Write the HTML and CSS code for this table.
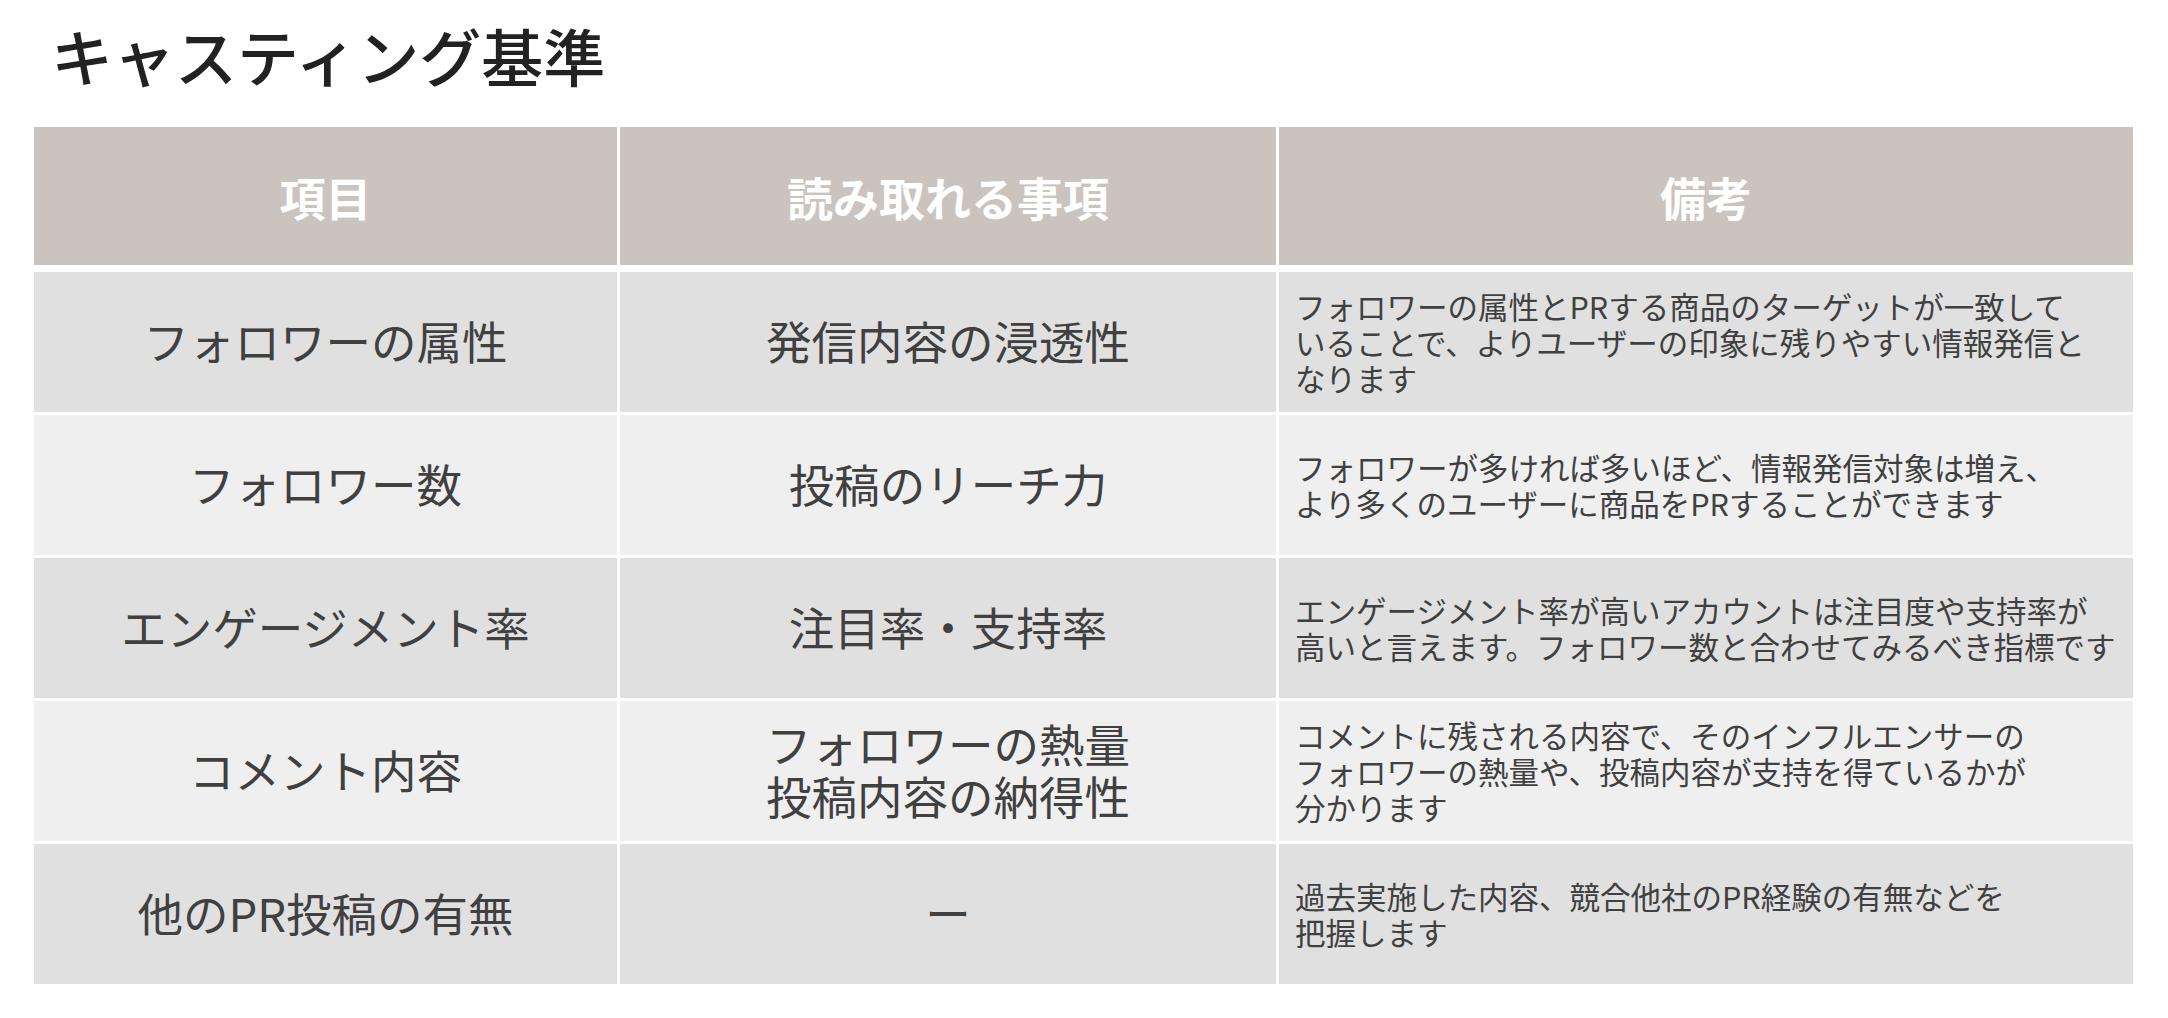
FILE: index.html
```html
<!DOCTYPE html>
<html lang="ja">
<head>
<meta charset="utf-8">
<title>キャスティング基準</title>
<link rel="stylesheet" href="styles.css">
</head>
<body>
<div class="page">
  <h1 class="title">キャスティング基準</h1>
  <div class="table">
    <div class="row head">
      <div class="cell">項目</div>
      <div class="cell">読み取れる事項</div>
      <div class="cell">備考</div>
    </div>
    <div class="row odd">
      <div class="cell big">フォロワーの属性</div>
      <div class="cell big">発信内容の浸透性</div>
      <div class="cell note">フォロワーの属性とPRする商品のターゲットが一致して<br>いることで、よりユーザーの印象に残りやすい情報発信と<br>なります</div>
    </div>
    <div class="row even">
      <div class="cell big">フォロワー数</div>
      <div class="cell big">投稿のリーチ力</div>
      <div class="cell note">フォロワーが多ければ多いほど、情報発信対象は増え、<br>より多くのユーザーに商品をPRすることができます</div>
    </div>
    <div class="row odd">
      <div class="cell big">エンゲージメント率</div>
      <div class="cell big">注目率・支持率</div>
      <div class="cell note">エンゲージメント率が高いアカウントは注目度や支持率が<br>高いと言えます。フォロワー数と合わせてみるべき指標です</div>
    </div>
    <div class="row even">
      <div class="cell big">コメント内容</div>
      <div class="cell big">フォロワーの熱量<br>投稿内容の納得性</div>
      <div class="cell note">コメントに残される内容で、そのインフルエンサーの<br>フォロワーの熱量や、投稿内容が支持を得ているかが<br>分かります</div>
    </div>
    <div class="row odd">
      <div class="cell big">他のPR投稿の有無</div>
      <div class="cell big">ー</div>
      <div class="cell note">過去実施した内容、競合他社のPR経験の有無などを<br>把握します</div>
    </div>
  </div>
</div>
</body>
</html>
```

FILE: styles.css
```css
html, body {
  margin: 0;
  padding: 0;
  background: #ffffff;
}

body {
  font-family: "Noto Sans CJK JP", "Noto Sans", sans-serif;
  color: #404040;
}

.page {
  padding: 24px 0 0 34px;
  width: 2099px;
}

.title {
  margin: 0 0 41px 17px;
  font-size: 62px;
  line-height: 62px;
  font-weight: 500;
  color: #222222;
}

.table {
  display: flex;
  flex-direction: column;
  gap: 3px;
}

.row {
  display: grid;
  grid-template-columns: 583px 656px 854px;
  column-gap: 3px;
  height: 140px;
}

.row.head {
  height: 138px;
  margin-bottom: 4px;
}

.cell {
  display: flex;
  align-items: center;
  justify-content: center;
  text-align: center;
}

.head .cell {
  background: #cbc4be;
  color: #ffffff;
  font-weight: 700;
  font-size: 46px;
  line-height: 54px;
}

.odd .cell {
  background: #e0e0e0;
}

.even .cell {
  background: #efefef;
}

.big {
  font-size: 45.5px;
  line-height: 52px;
  color: #404040;
  padding-bottom: 4px;
  box-sizing: border-box;
}

.note {
  justify-content: flex-start;
  text-align: left;
  padding: 0 6px 0 16px;
  font-size: 30.5px;
  line-height: 36px;
  white-space: nowrap;
  color: #404040;
}
```
